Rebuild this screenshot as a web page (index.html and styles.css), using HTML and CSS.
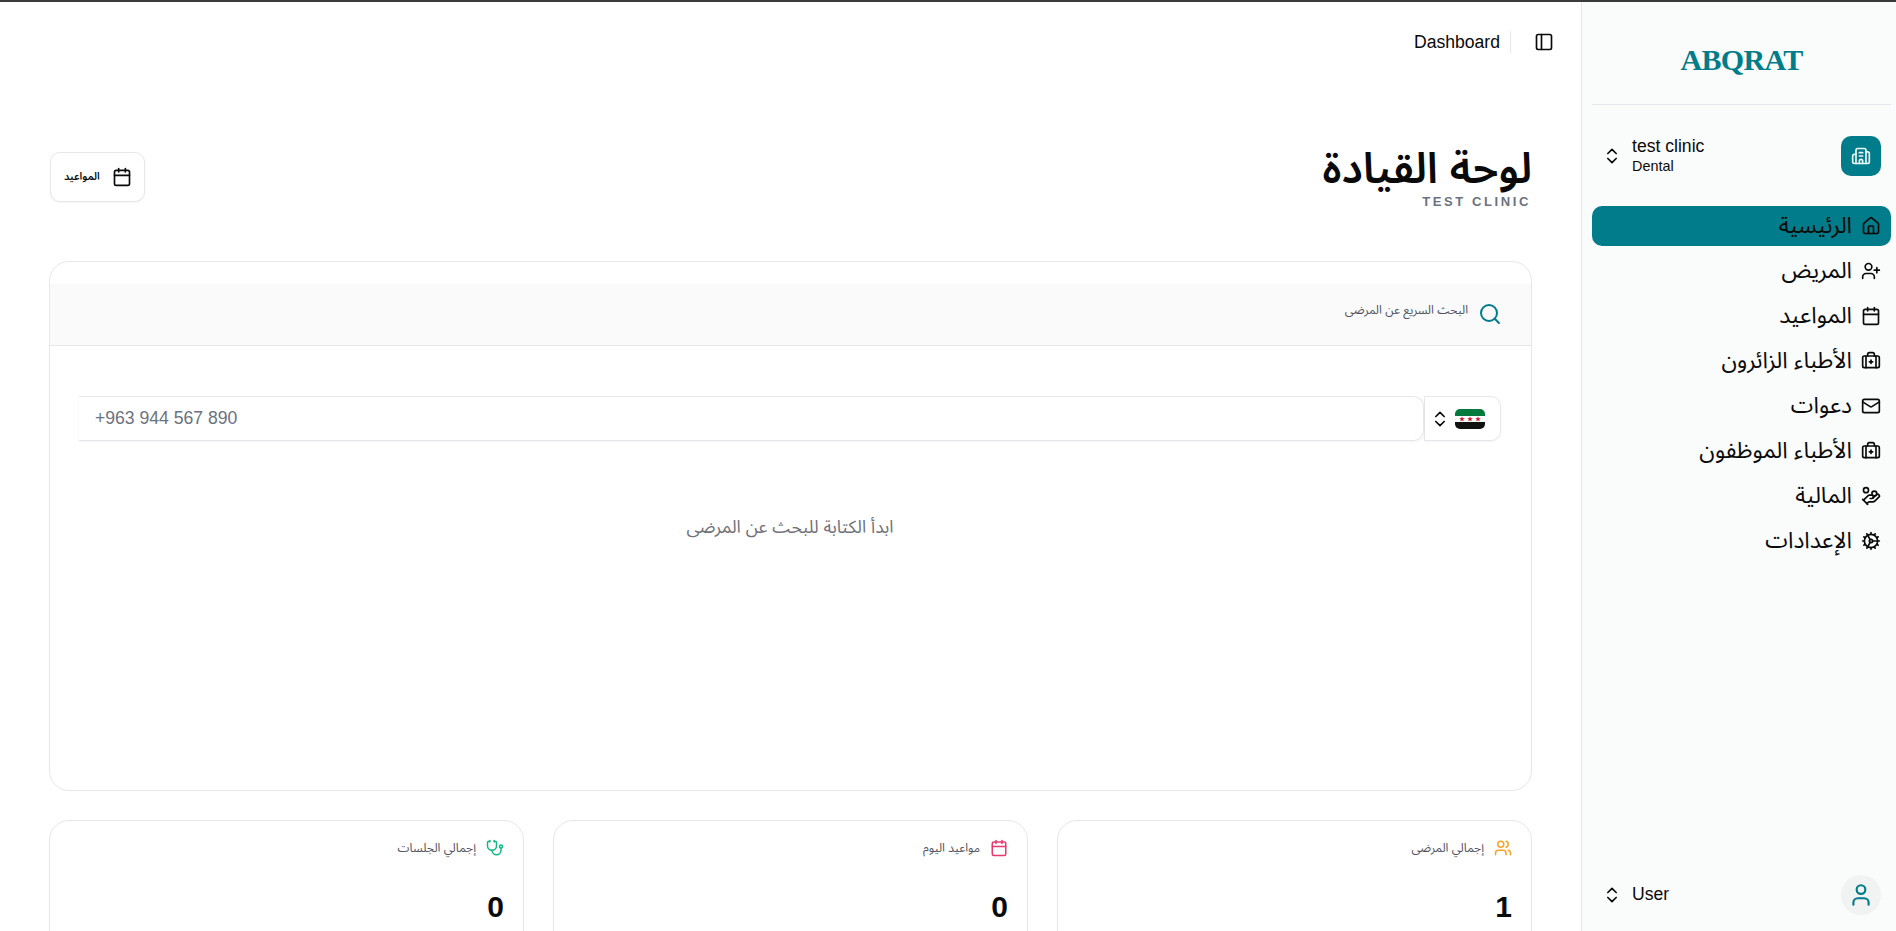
FILE: index.html
```html
<!DOCTYPE html>
<html lang="ar" dir="rtl">
<head>
    <meta charset="UTF-8">
    <meta name="viewport" content="width=device-width, initial-scale=1.0">
    <title>Dashboard</title>
    <link rel="stylesheet" href="styles.css">
</head>
<body>
    <svg class="sprite" aria-hidden="true">
        <symbol id="i-chevrons" viewBox="0 0 24 24"><path d="m7 15 5 5 5-5"/><path d="m7 9 5-5 5 5"/></symbol>
        <symbol id="i-building" viewBox="0 0 24 24"><path d="M10 12h4"/><path d="M10 8h4"/><path d="M14 21v-3a2 2 0 0 0-4 0v3"/><path d="M6 10H4a2 2 0 0 0-2 2v7a2 2 0 0 0 2 2h16a2 2 0 0 0 2-2V9a2 2 0 0 0-2-2h-2"/><path d="M6 21V5a2 2 0 0 1 2-2h8a2 2 0 0 1 2 2v16"/></symbol>
        <symbol id="i-house" viewBox="0 0 24 24"><path d="M15 21v-8a1 1 0 0 0-1-1h-4a1 1 0 0 0-1 1v8"/><path d="M3 10a2 2 0 0 1 .709-1.528l7-5.999a2 2 0 0 1 2.582 0l7 5.999A2 2 0 0 1 21 10v9a2 2 0 0 1-2 2H5a2 2 0 0 1-2-2z"/></symbol>
        <symbol id="i-user-plus" viewBox="0 0 24 24"><path d="M16 21v-2a4 4 0 0 0-4-4H6a4 4 0 0 0-4 4v2"/><circle cx="9" cy="7" r="4"/><path d="M19 8v6"/><path d="M22 11h-6"/></symbol>
        <symbol id="i-calendar" viewBox="0 0 24 24"><path d="M8 2v4"/><path d="M16 2v4"/><rect x="3" y="4" width="18" height="18" rx="2"/><path d="M3 10h18"/></symbol>
        <symbol id="i-briefcase" viewBox="0 0 24 24"><path d="M12 11v4"/><path d="M14 13h-4"/><path d="M16 6V4a2 2 0 0 0-2-2h-4a2 2 0 0 0-2 2v2"/><path d="M18 6v14"/><path d="M6 6v14"/><rect x="2" y="6" width="20" height="14" rx="2"/></symbol>
        <symbol id="i-mail" viewBox="0 0 24 24"><rect x="2" y="4" width="20" height="16" rx="2"/><path d="m22 7-8.97 5.7a1.94 1.94 0 0 1-2.06 0L2 7"/></symbol>
        <symbol id="i-coins" viewBox="0 0 24 24"><path d="M11 15h2a2 2 0 1 0 0-4h-3c-.6 0-1.1.2-1.4.6L3 17"/><path d="m7 21 1.6-1.4c.3-.4.8-.6 1.4-.6h4c1.1 0 2.1-.4 2.8-1.2l4.6-4.4a2 2 0 0 0-2.75-2.91l-4.2 3.9"/><path d="m2 16 6 6"/><circle cx="16" cy="9" r="2.9"/><circle cx="6" cy="5" r="3"/></symbol>
        <symbol id="i-cog" viewBox="0 0 24 24"><path d="M12 20a8 8 0 1 0 0-16 8 8 0 0 0 0 16Z"/><path d="M12 14a2 2 0 1 0 0-4 2 2 0 0 0 0 4Z"/><path d="M12 2v2"/><path d="M12 22v-2"/><path d="m17 20.66-1-1.73"/><path d="M11 10.27 7 3.34"/><path d="m20.66 17-1.73-1"/><path d="m3.34 7 1.73 1"/><path d="M14 12h8"/><path d="M2 12h2"/><path d="m20.66 7-1.73 1"/><path d="m3.34 17 1.73-1"/><path d="m17 3.34-1 1.73"/><path d="m11 13.73-4 6.93"/></symbol>
        <symbol id="i-user" viewBox="0 0 24 24"><path d="M19 21v-2a4 4 0 0 0-4-4H9a4 4 0 0 0-4 4v2"/><circle cx="12" cy="7" r="4"/></symbol>
        <symbol id="i-panel" viewBox="0 0 24 24"><rect x="3" y="3" width="18" height="18" rx="2"/><path d="M9 3v18"/></symbol>
        <symbol id="i-search" viewBox="0 0 24 24"><circle cx="11" cy="11" r="8"/><path d="m21 21-4.3-4.3"/></symbol>
        <symbol id="i-users" viewBox="0 0 24 24"><path d="M16 21v-2a4 4 0 0 0-4-4H6a4 4 0 0 0-4 4v2"/><circle cx="9" cy="7" r="4"/><path d="M22 21v-2a4 4 0 0 0-3-3.87"/><path d="M16 3.13a4 4 0 0 1 0 7.75"/></symbol>
        <symbol id="i-stethoscope" viewBox="0 0 24 24"><path d="M11 2v2"/><path d="M5 2v2"/><path d="M5 3H4a2 2 0 0 0-2 2v4a6 6 0 0 0 12 0V5a2 2 0 0 0-2-2h-1"/><path d="M8 15a6 6 0 0 0 12 0v-3"/><circle cx="20" cy="10" r="2"/></symbol>
    </svg>

    <div class="top-line"></div>
    <div class="shell">
        <aside class="sidebar">
            <div class="logo">ABQRAT</div>

            <div class="switcher clinic-switcher">
                <span class="switcher-badge clinic-badge"><svg class="icon icon-20"><use href="#i-building"/></svg></span>
                <div class="switcher-text" dir="ltr">
                    <div class="switcher-name">test clinic</div>
                    <div class="switcher-sub">Dental</div>
                </div>
                <svg class="icon icon-20 switcher-chevrons"><use href="#i-chevrons"/></svg>
            </div>

            <nav class="nav">
                <a class="nav-item active"><svg class="icon icon-20"><use href="#i-house"/></svg><span>الرئيسية</span></a>
                <a class="nav-item"><svg class="icon icon-20"><use href="#i-user-plus"/></svg><span>المريض</span></a>
                <a class="nav-item"><svg class="icon icon-20"><use href="#i-calendar"/></svg><span>المواعيد</span></a>
                <a class="nav-item"><svg class="icon icon-20"><use href="#i-briefcase"/></svg><span>الأطباء الزائرون</span></a>
                <a class="nav-item"><svg class="icon icon-20"><use href="#i-mail"/></svg><span>دعوات</span></a>
                <a class="nav-item"><svg class="icon icon-20"><use href="#i-briefcase"/></svg><span>الأطباء الموظفون</span></a>
                <a class="nav-item"><svg class="icon icon-20"><use href="#i-coins"/></svg><span>المالية</span></a>
                <a class="nav-item"><svg class="icon icon-20"><use href="#i-cog"/></svg><span>الإعدادات</span></a>
            </nav>

            <div class="switcher user-switcher">
                <span class="switcher-badge user-badge"><svg class="icon icon-26"><use href="#i-user"/></svg></span>
                <div class="switcher-text" dir="ltr">
                    <div class="switcher-name">User</div>
                </div>
                <svg class="icon icon-20 switcher-chevrons"><use href="#i-chevrons"/></svg>
            </div>
        </aside>

        <main class="main">
            <header class="topbar">
                <svg class="icon icon-20"><use href="#i-panel"/></svg>
                <span class="topbar-sep"></span>
                <span class="topbar-title">Dashboard</span>
            </header>

            <div class="content">
                <div class="page-head">
                    <div>
                        <h1 class="page-title">لوحة القيادة</h1>
                        <div class="page-sub" dir="ltr">TEST CLINIC</div>
                    </div>
                    <button class="head-btn"><svg class="icon icon-20"><use href="#i-calendar"/></svg><span>المواعيد</span></button>
                </div>

                <section class="search-card">
                    <div class="search-head">
                        <svg class="icon icon-search"><use href="#i-search"/></svg>
                        <span class="search-title">البحث السريع عن المرضى</span>
                    </div>
                    <div class="search-body">
                        <div class="phone">
                            <div class="phone-country">
                                <svg class="flag" viewBox="0 0 30 20">
                                    <rect width="30" height="7" fill="#007a3d"/>
                                    <rect y="7" width="30" height="6" fill="#fff"/>
                                    <rect y="13" width="30" height="7" fill="#111"/>
                                    <polygon class="star" points="7,7.4 7.8,9.2 9.8,9.2 8.2,10.4 8.8,12.4 7,11.2 5.2,12.4 5.8,10.4 4.2,9.2 6.2,9.2"/>
                                    <polygon class="star" points="15,7.4 15.8,9.2 17.8,9.2 16.2,10.4 16.8,12.4 15,11.2 13.2,12.4 13.8,10.4 12.2,9.2 14.2,9.2"/>
                                    <polygon class="star" points="23,7.4 23.8,9.2 25.8,9.2 24.2,10.4 24.8,12.4 23,11.2 21.2,12.4 21.8,10.4 20.2,9.2 22.2,9.2"/>
                                </svg>
                                <svg class="icon icon-20"><use href="#i-chevrons"/></svg>
                            </div>
                            <div class="phone-input" dir="ltr">+963 944 567 890</div>
                        </div>
                        <p class="search-hint">ابدأ الكتابة للبحث عن المرضى</p>
                    </div>
                </section>

                <div class="stats">
                    <div class="stat-card">
                        <div class="stat-label"><svg class="icon icon-18 amber"><use href="#i-users"/></svg><span>إجمالي المرضى</span></div>
                        <div class="stat-value">1</div>
                    </div>
                    <div class="stat-card">
                        <div class="stat-label"><svg class="icon icon-18 pink"><use href="#i-calendar"/></svg><span>مواعيد اليوم</span></div>
                        <div class="stat-value">0</div>
                    </div>
                    <div class="stat-card">
                        <div class="stat-label"><svg class="icon icon-18 green"><use href="#i-stethoscope"/></svg><span>إجمالي الجلسات</span></div>
                        <div class="stat-value">0</div>
                    </div>
                </div>
            </div>
        </main>
    </div>
</body>
</html>
```

FILE: styles.css
```css
* {
    box-sizing: border-box;
}

html, body {
    height: 100%;
    margin: 0;
    overflow: hidden;
}

body {
    display: flex;
    flex-direction: column;
    background: #fff;
    color: #0a0a0a;
    font-family: "Liberation Sans", "Noto Sans Arabic", sans-serif;
}

.sprite {
    display: none;
}

.icon {
    fill: none;
    stroke: currentColor;
    stroke-width: 2;
    stroke-linecap: round;
    stroke-linejoin: round;
    flex-shrink: 0;
}

.icon-18 { width: 18px; height: 18px; }
.icon-20 { width: 20px; height: 20px; }
.icon-26 { width: 26px; height: 26px; }
.amber { color: #f5a524; }
.pink { color: #e8396f; }
.green { color: #10b981; }

.top-line {
    height: 2px;
    flex-shrink: 0;
    background: #3a3a3a;
}

.shell {
    display: flex;
    flex: 1;
    min-height: 0;
}

/* sidebar */
.sidebar {
    display: flex;
    flex-direction: column;
    width: 315px;
    flex-shrink: 0;
    padding: 0 5px 16px 10px;
    background: #fafbfb;
    border-left: 1px solid #e5e7eb;
}

.logo {
    height: 103px;
    padding-top: 14px;
    border-bottom: 1px solid #e5e7eb;
    display: flex;
    align-items: center;
    justify-content: center;
    font-family: "Liberation Serif", serif;
    font-size: 30px;
    font-weight: 700;
    letter-spacing: -0.7px;
    color: #007c8a;
}

.switcher {
    display: flex;
    align-items: center;
    padding: 0 10px 0 0;
}

.clinic-switcher {
    margin-top: 31px;
}

.user-switcher {
    margin-top: auto;
}

.switcher-badge {
    display: flex;
    align-items: center;
    justify-content: center;
    width: 40px;
    height: 40px;
    flex-shrink: 0;
    border-radius: 10px;
}

.clinic-badge {
    background: #007c8a;
    color: #e8f6f7;
}

.user-badge {
    border-radius: 50%;
    background: #f1f3f3;
    color: #007c8a;
}

.switcher-text {
    flex: 1;
    text-align: left;
    line-height: 1.2;
}

.switcher-name {
    font-size: 17.6px;
}

.switcher-sub {
    font-size: 14.4px;
    margin-top: 1px;
}

.switcher-chevrons {
    margin: 0 10px;
}

.nav {
    display: flex;
    flex-direction: column;
    gap: 5px;
    margin-top: 30px;
}

.nav-item {
    display: flex;
    align-items: center;
    gap: 9px;
    height: 40px;
    padding: 0 10px;
    border-radius: 10px;
    font-size: 22.8px;
}

.nav-item.active {
    background: #007c8a;
}

/* main */
.main {
    flex: 1;
    min-width: 0;
    overflow: hidden;
}

.topbar {
    display: flex;
    align-items: center;
    height: 80px;
    padding: 0 27px 0 0;
    font-size: 17.6px;
}

.topbar-sep {
    width: 1px;
    height: 22px;
    margin: 0 23px 0 10px;
    background: #e5e7eb;
}

.content {
    padding: 0 49px;
}

.page-head {
    display: flex;
    justify-content: space-between;
    align-items: flex-start;
    margin-top: 61px;
}

.page-title {
    margin: 0;
    font-size: 42.6px;
    font-weight: 600;
    line-height: 50px;
}

.page-sub {
    font-size: 13px;
    font-weight: 700;
    letter-spacing: 2.6px;
    color: #6b7280;
    text-align: right;
    line-height: 14px;
    margin-top: 2px;
    margin-right: 1px;
}

.head-btn {
    display: flex;
    align-items: center;
    gap: 12px;
    height: 50px;
    margin-top: 9px;
    margin-left: 1px;
    padding: 0 12px 0 13px;
    background: #fff;
    border: 1px solid #e5e7eb;
    border-radius: 10px;
    box-shadow: 0 1px 2px rgba(0, 0, 0, 0.05);
    font: 600 10.5px "Liberation Sans", "Noto Sans Arabic", sans-serif;
    color: #0a0a0a;
}

.search-card {
    height: 530px;
    margin-top: 52px;
    padding-top: 22px;
    border: 1px solid #e5e7eb;
    border-radius: 20px;
}

.search-head {
    display: flex;
    align-items: center;
    gap: 10px;
    height: 62px;
    padding: 0 29px;
    background: #fafafa;
    border-bottom: 1px solid #e5e7eb;
    font-size: 12px;
    color: #52525b;
}

.search-title {
    margin-bottom: 8px;
}

.icon-search {
    width: 24px;
    height: 24px;
    margin-bottom: 2px;
    color: #007c8a;
}

.search-body {
    padding: 50px 30px 0 29px;
}

.phone {
    display: flex;
    height: 45px;
}

.phone-country {
    display: flex;
    align-items: center;
    gap: 5px;
    width: 77px;
    padding: 0 15px;
    border: 1px solid #e5e7eb;
    border-radius: 0 10px 10px 0;
    box-shadow: 0 1px 2px rgba(0, 0, 0, 0.05);
}

.flag {
    width: 30px;
    height: 20px;
    border-radius: 5px;
    flex-shrink: 0;
}

.star {
    fill: #ce1126;
}

.phone-input {
    flex: 1;
    display: flex;
    align-items: center;
    padding: 0 16px;
    border: 1px solid #e5e7eb;
    border-left: none;
    border-radius: 0 10px 10px 0;
    box-shadow: 0 1px 2px rgba(0, 0, 0, 0.05);
    font-size: 17.6px;
    color: #6b7280;
}

.search-hint {
    margin: 68px 0 0;
    text-align: center;
    font-size: 17.6px;
    color: #71717a;
}

.stats {
    display: grid;
    grid-template-columns: repeat(3, 1fr);
    gap: 29px;
    margin-top: 29px;
}

.stat-card {
    height: 180px;
    padding: 18px 19px 19px 20px;
    border: 1px solid #e5e7eb;
    border-radius: 20px;
}

.stat-label {
    display: flex;
    align-items: center;
    gap: 10px;
    height: 18px;
    font-size: 12px;
    color: #52525b;
}

.stat-value {
    margin-top: 33px;
    font-size: 30px;
    font-weight: 700;
}
```
